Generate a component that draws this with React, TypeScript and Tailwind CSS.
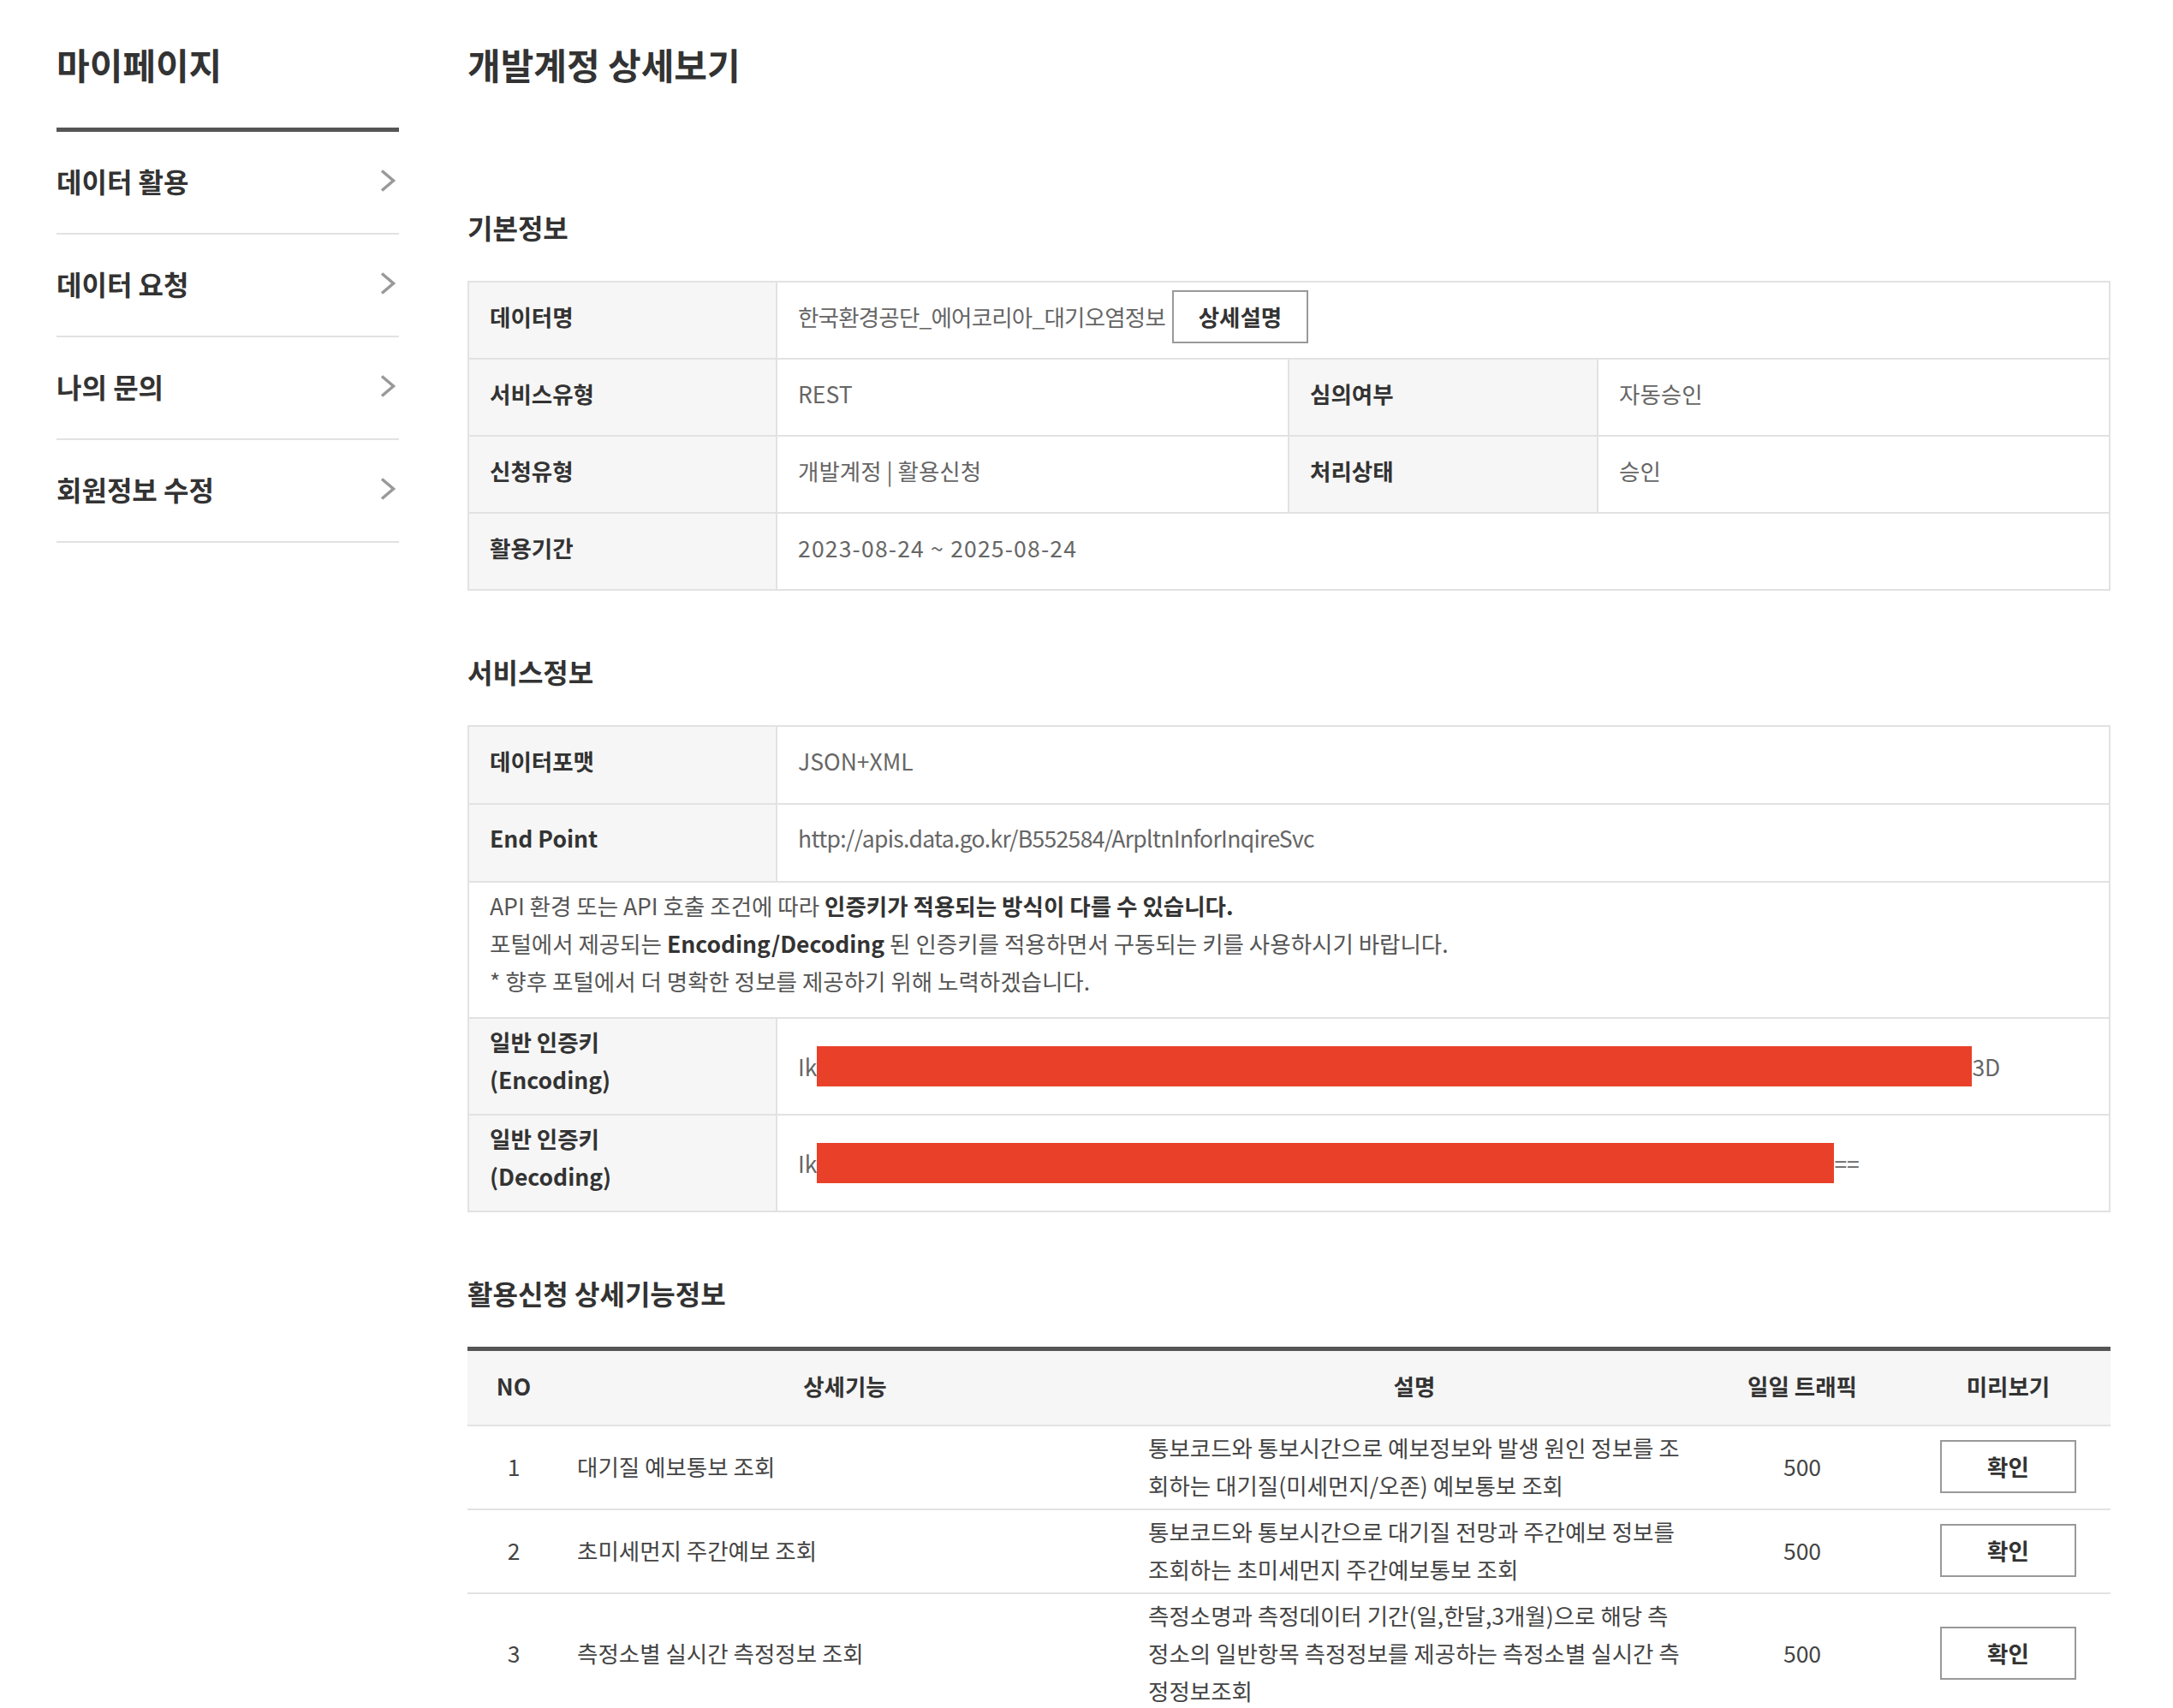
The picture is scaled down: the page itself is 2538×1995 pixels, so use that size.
import { ReactNode } from 'react';

const menu = ['데이터 활용', '데이터 요청', '나의 문의', '회원정보 수정'];

const features = [
  {
    no: 1,
    name: '대기질 예보통보 조회',
    desc: ['통보코드와 통보시간으로 예보정보와 발생 원인 정보를 조', '회하는 대기질(미세먼지/오존) 예보통보 조회'],
    traffic: 500,
  },
  {
    no: 2,
    name: '초미세먼지 주간예보 조회',
    desc: ['통보코드와 통보시간으로 대기질 전망과 주간예보 정보를', '조회하는 초미세먼지 주간예보통보 조회'],
    traffic: 500,
  },
  {
    no: 3,
    name: '측정소별 실시간 측정정보 조회',
    desc: [
      '측정소명과 측정데이터 기간(일,한달,3개월)으로 해당 측',
      '정소의 일반항목 측정정보를 제공하는 측정소별 실시간 측',
      '정정보조회',
    ],
    traffic: 500,
  },
];

function Chevron() {
  return (
    <svg width="20" height="26" viewBox="0 0 20 26" className="mr-[3px]">
      <path d="M3 1.5 L16.5 13 L3 24.5" fill="none" stroke="#999" strokeWidth="3.5" />
    </svg>
  );
}

function Label({ children, className = '' }: { children: ReactNode; className?: string }) {
  return (
    <div className={`flex shrink-0 items-center border-r-2 border-[#e2e2e2] bg-[#f6f6f6] px-6 font-bold text-[#333] ${className}`}>
      {children}
    </div>
  );
}

function Value({ children, className = '' }: { children: ReactNode; className?: string }) {
  return <div className={`flex items-center px-6 text-[#666] ${className}`}>{children}</div>;
}

function SectionTitle({ children, first }: { children: ReactNode; first?: boolean }) {
  return (
    <h3
      className={`text-[32px] leading-[45px] font-bold text-[#333] mb-[40px] ${
        first ? 'mt-[139px]' : 'mt-[72px]'
      }`}
    >
      {children}
    </h3>
  );
}

function BoxButton({ children }: { children: ReactNode }) {
  return (
    <button className="flex h-[62px] w-[159px] shrink-0 items-center justify-center border-2 border-[#999] bg-white font-bold text-[#333]">
      {children}
    </button>
  );
}

export default function App() {
  return (
    <div className="min-h-screen bg-white font-['Noto_Sans_CJK_KR','Noto_Sans',sans-serif] text-[26.5px] text-[#333]">
      <div className="flex pl-[66px] pt-[46px] pb-[40px]">
        {/* Sidebar */}
        <aside className="w-[400px] shrink-0">
          <h2 className="text-[42px] leading-[58px] font-bold text-[#333]">마이페이지</h2>
          <ul className="mt-[45px] border-t-[5px] border-[#555]">
            {menu.map((m) => (
              <li
                key={m}
                className="flex h-[120px] items-center justify-between border-b-2 border-[#e2e2e2] pb-[4px] text-[32px] font-bold text-[#333]"
              >
                <span>{m}</span>
                <Chevron />
              </li>
            ))}
          </ul>
        </aside>

        {/* Main */}
        <main className="ml-[80px] w-[1919px] shrink-0">
          <h1 className="text-[42px] leading-[58px] font-bold text-[#333]">개발계정 상세보기</h1>

          <SectionTitle first>기본정보</SectionTitle>
          <div className="border-x-2 border-t-2 border-[#e2e2e2]">
            <div className="flex h-[90px] border-b-2 border-[#e2e2e2] [&>div]:pb-[8px]">
              <Label className="w-[360px]">데이터명</Label>
              <Value className="flex-1">
                <span className="tracking-[-0.03em]">한국환경공단_에어코리아_대기오염정보</span>
                <span className="ml-[8px]">
                  <BoxButton>상세설명</BoxButton>
                </span>
              </Value>
            </div>
            <div className="flex h-[90px] border-b-2 border-[#e2e2e2] [&>div]:pb-[9px]">
              <Label className="w-[360px]">서비스유형</Label>
              <Value className="w-[598px] shrink-0 border-r-2 border-[#e2e2e2]">REST</Value>
              <Label className="w-[361px]">심의여부</Label>
              <Value className="flex-1">자동승인</Value>
            </div>
            <div className="flex h-[90px] border-b-2 border-[#e2e2e2] [&>div]:pb-[9px]">
              <Label className="w-[360px]">신청유형</Label>
              <Value className="w-[598px] shrink-0 border-r-2 border-[#e2e2e2]">개발계정 | 활용신청</Value>
              <Label className="w-[361px]">처리상태</Label>
              <Value className="flex-1">승인</Value>
            </div>
            <div className="flex h-[90px] border-b-2 border-[#e2e2e2] [&>div]:pb-[9px]">
              <Label className="w-[360px]">활용기간</Label>
              <Value className="flex-1">
                <span className="tracking-[0.045em]">2023-08-24 ~ 2025-08-24</span>
              </Value>
            </div>
          </div>

          <SectionTitle>서비스정보</SectionTitle>
          <div className="border-x-2 border-t-2 border-[#e2e2e2]">
            <div className="flex h-[91px] border-b-2 border-[#e2e2e2] [&>div]:pb-[10px]">
              <Label className="w-[360px]">데이터포맷</Label>
              <Value className="flex-1">JSON+XML</Value>
            </div>
            <div className="flex h-[91px] border-b-2 border-[#e2e2e2] [&>div]:pb-[11px]">
              <Label className="w-[360px]">End Point</Label>
              <Value className="flex-1">
                <span className="tracking-[-0.025em]">http://apis.data.go.kr/B552584/ArpltnInforInqireSvc</span>
              </Value>
            </div>
            <div className="h-[159px] border-b-2 border-[#e2e2e2] px-6 pt-[5px] leading-[44px] text-[#555]">
              <p>
                API 환경 또는 API 호출 조건에 따라 <b className="text-[#333]">인증키가 적용되는 방식이 다를 수 있습니다.</b>
              </p>
              <p>
                포털에서 제공되는 <b className="text-[#333]">Encoding/Decoding</b> 된 인증키를 적용하면서 구동되는 키를 사용하시기 바랍니다.
              </p>
              <p>* 향후 포털에서 더 명확한 정보를 제공하기 위해 노력하겠습니다.</p>
            </div>
            <div className="flex h-[113px] border-b-2 border-[#e2e2e2]">
              <Label className="w-[360px] pb-[13px] leading-[44px]">
                <span>
                  일반 인증키
                  <br />
                  (Encoding)
                </span>
              </Label>
              <Value className="flex-1">
                <span>Ik</span>
                <span className="inline-block h-[47px] w-[1349px] bg-[#e94129]" />
                <span>3D</span>
              </Value>
            </div>
            <div className="flex h-[113px] border-b-2 border-[#e2e2e2]">
              <Label className="w-[360px] pb-[13px] leading-[44px]">
                <span>
                  일반 인증키
                  <br />
                  (Decoding)
                </span>
              </Label>
              <Value className="flex-1">
                <span>Ik</span>
                <span className="inline-block h-[47px] w-[1188px] bg-[#e94129]" />
                <span>==</span>
              </Value>
            </div>
          </div>

          <SectionTitle>활용신청 상세기능정보</SectionTitle>
          <div className="border-t-[5px] border-[#555]">
            <div className="grid h-[88px] grid-cols-[108px_666px_664px_242px_1fr] items-center border-b-2 border-[#e2e2e2] bg-[#f6f6f6] pb-[5px] text-center font-bold text-[#333]">
              <div>NO</div>
              <div>상세기능</div>
              <div>설명</div>
              <div>일일 트래픽</div>
              <div>미리보기</div>
            </div>
            {features.map((f) => (
              <div
                key={f.no}
                className="grid grid-cols-[108px_666px_664px_242px_1fr] items-center border-b-2 border-[#e2e2e2] pt-[3px] pb-[5px] text-[#444]"
              >
                <div className="text-center">{f.no}</div>
                <div className="px-[20px]">{f.name}</div>
                <div className="px-[21px] leading-[44px]">
                  {f.desc.map((line) => (
                    <div key={line}>{line}</div>
                  ))}
                </div>
                <div className="text-center">{f.traffic}</div>
                <div className="flex justify-center">
                  <BoxButton>확인</BoxButton>
                </div>
              </div>
            ))}
          </div>
        </main>
      </div>
    </div>
  );
}
